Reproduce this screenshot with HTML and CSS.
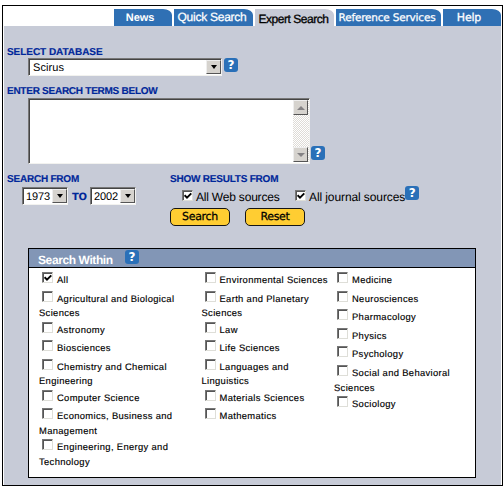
FILE: index.html
```html
<!DOCTYPE html>
<html lang="en">
<head>
<meta charset="utf-8">
<title>Expert Search</title>
<link rel="stylesheet" href="styles.css">
</head>
<body>
<main class="frame">
  <nav class="tabs">
    <a class="tab news">News</a>
    <a class="tab quick">Quick Search</a>
    <a class="tab expert">Expert Search</a>
    <a class="tab refs">Reference Services</a>
    <a class="tab help-tab">Help</a>
  </nav>
  <div class="panel">
    <h2 class="label db-label">SELECT DATABASE</h2>
    <div class="db-row">
      <div class="select db"><span>Scirus</span><i class="drop"></i></div>
      <b class="help">?</b>
    </div>
    <h2 class="label terms-label">ENTER SEARCH TERMS BELOW</h2>
    <div class="terms-row">
      <div class="textarea"><div class="scroll"><i class="arrow up"></i><i class="arrow down"></i></div></div>
      <b class="help">?</b>
    </div>
    <div class="options">
      <section class="from">
        <h2 class="label">SEARCH FROM</h2>
        <div class="years">
          <div class="select year"><span>1973</span><i class="drop"></i></div>
          <span class="to">TO</span>
          <div class="select year"><span>2002</span><i class="drop"></i></div>
        </div>
      </section>
      <section class="results">
        <h2 class="label">SHOW RESULTS FROM</h2>
        <div class="sources">
          <i class="check on"><svg viewBox="0 0 8 8"><path d="M.6 3.2 3 5.6 7.3 1.3"/></svg></i><span class="source web">All Web sources</span>
          <i class="check on"><svg viewBox="0 0 8 8"><path d="M.6 3.2 3 5.6 7.3 1.3"/></svg></i><span class="source">All journal sources</span>
          <b class="help">?</b>
        </div>
        <div class="buttons"><span class="button">Search</span><span class="button">Reset</span></div>
      </section>
    </div>
    <section class="within">
      <header><h3>Search Within</h3><b class="help">?</b></header>
      <div class="columns">
        <ul class="col1">
          <li><i class="check on"><svg viewBox="0 0 8 8"><path d="M.6 3.2 3 5.6 7.3 1.3"/></svg></i><span>All</span></li>
          <li><i class="check"></i><span>Agricultural and Biological</span><p>Sciences</p></li>
          <li><i class="check"></i><span>Astronomy</span></li>
          <li><i class="check"></i><span>Biosciences</span></li>
          <li><i class="check"></i><span>Chemistry and Chemical</span><p>Engineering</p></li>
          <li><i class="check"></i><span>Computer Science</span></li>
          <li><i class="check"></i><span>Economics, Business and</span><p>Management</p></li>
          <li><i class="check"></i><span>Engineering, Energy and</span><p>Technology</p></li>
        </ul>
        <ul class="col2">
          <li><i class="check"></i><span>Environmental Sciences</span></li>
          <li><i class="check"></i><span>Earth and Planetary</span><p>Sciences</p></li>
          <li><i class="check"></i><span>Law</span></li>
          <li><i class="check"></i><span>Life Sciences</span></li>
          <li><i class="check"></i><span>Languages and</span><p>Linguistics</p></li>
          <li><i class="check"></i><span>Materials Sciences</span></li>
          <li><i class="check"></i><span>Mathematics</span></li>
        </ul>
        <ul class="col3">
          <li><i class="check"></i><span>Medicine</span></li>
          <li><i class="check"></i><span>Neurosciences</span></li>
          <li><i class="check"></i><span>Pharmacology</span></li>
          <li><i class="check"></i><span>Physics</span></li>
          <li><i class="check"></i><span>Psychology</span></li>
          <li><i class="check"></i><span>Social and Behavioral</span><p>Sciences</p></li>
          <li><i class="check"></i><span>Sociology</span></li>
        </ul>
      </div>
    </section>
  </div>
</main>
</body>
</html>
```
FILE: styles.css
```css
* { box-sizing: border-box; }
body { margin: 0; background: #fff; color: #000; font-family: "Liberation Sans", Arial, sans-serif; text-rendering: geometricPrecision; overflow: hidden; }
h2, h3, p, ul { margin: 0; padding: 0; }
.frame { width: 501px; height: 481px; margin: 5px 0 0 2px; border: 1px solid #000; padding: 0 1px; display: flex; flex-direction: column; }
.tabs { height: 20px; display: flex; justify-content: flex-end; padding-top: 3px; flex: none; }
.tab { height: 17px; line-height: 17px; background: #2f70b4; color: #fff; font-size: 12px; text-align: center; white-space: nowrap; border-top-right-radius: 9px 6px; }
.news { width: 58px; margin-right: 2px; padding-right: 6px; font-weight: bold; font-size: 11px; line-height: 19px; letter-spacing: -.1px; }
.quick { width: 79px; margin-right: 2px; padding-right: 3px; font-size: 12px; letter-spacing: -.25px; -webkit-text-stroke: .25px #fff; line-height: 17px; }
.expert { width: 79px; margin-right: 2px; padding-right: 2px; background: #c7cbd7; color: #000; font-size: 12px; line-height: 20px; letter-spacing: -.45px; -webkit-text-stroke: .3px #000; }
.refs { width: 105px; margin-right: 2px; padding-right: 3px; font-family: "DejaVu Sans", sans-serif; font-size: 10.5px; line-height: 19px; letter-spacing: -.2px; -webkit-text-stroke: .25px #fff; }
.help-tab { width: 58px; padding-right: 6px; font-family: "DejaVu Sans", sans-serif; font-size: 11px; line-height: 18px; letter-spacing: -.2px; -webkit-text-stroke: .3px #fff; }
.panel { flex: 1; background: #c7cbd7; display: flex; flex-direction: column; padding-left: 3px; }
.label { color: #00279a; font-size: 10px; line-height: 14px; height: 12px; letter-spacing: -.22px; font-weight: bold; white-space: nowrap; -webkit-text-stroke: .15px #00279a; }
.db-label { margin-top: 20px; letter-spacing: -.05px; }
.terms-label { letter-spacing: -.26px; }
.db-row { display: flex; gap: 2px; padding-left: 21px; height: 18px; }
.select { border: 1px solid; border-color: #777 #f2f2ef #f2f2ef #777; box-shadow: inset 1px 1px #444; background: #fff; display: flex; justify-content: space-between; font-size: 11px; }
.select span { padding: 1px 0 0 4px; line-height: 16px; letter-spacing: .1px; }
.db { width: 194px; height: 18px; }
.drop { width: 15px; margin: 1px 0; border: 1px solid; border-color: #eee #555 #555 #eee; background: #d6d3ce; display: grid; place-items: center; }
.drop::before { content: ""; border: 3.5px solid transparent; border-top: 4px solid #000; border-bottom: 0; }
.help { width: 14px; height: 14px; flex: none; border-radius: 3px; background: #2a70b8; color: #fff; text-align: center; font: bold 12px/15px "DejaVu Sans", sans-serif; }
.terms-label { margin-top: 9px; }
.terms-row { display: flex; gap: 1px; align-items: flex-end; padding-left: 21px; margin-top: 1px; height: 66px; }
.textarea { width: 282px; height: 66px; background: #fff; border: 1px solid; border-color: #777 #f2f2ef #f2f2ef #777; box-shadow: inset 1px 1px #444; display: flex; justify-content: flex-end; padding: 1px 0; }
.terms-row .help { margin-bottom: 4px; }
.scroll { width: 16px; background: repeating-conic-gradient(#fff 0 25%, #dedbd6 0 50%) 0 0 / 2px 2px; display: flex; flex-direction: column; justify-content: space-between; }
.arrow { width: 15px; height: 15px; border: 1px solid; border-color: #eee #555 #555 #eee; background: #d6d3ce; display: grid; place-items: center; }
.arrow::before { content: ""; border: 4px solid transparent; }
.up::before { border-bottom-color: #848284; border-top: 0; }
.down::before { border-top-color: #848284; border-bottom: 0; }
.options { display: flex; height: 75px; padding-top: 9px; }
.from { width: 163px; }
.years { display: flex; padding: 2px 0 0 15px; }
.year { width: 46px; height: 18px; }
.year span { padding-left: 3px; letter-spacing: -.15px; }
.to { width: 22px; padding: 0 4px; text-align: center; color: #00279a; font: bold 10px/21px "DejaVu Sans", sans-serif; letter-spacing: -.4px; }
.sources { display: flex; padding-left: 12px; height: 23px; }
.check { width: 11px; height: 11px; flex: none; border: 1px solid; border-color: #777 #deded8 #deded8 #777; box-shadow: inset 1px 1px #555; background: #fff; display: block; }
.check svg { display: block; width: 8px; height: 8px; margin: 1px; }
.check path { fill: none; stroke: #000; stroke-width: 1.9; }
.sources .check { margin-top: 5px; }
.source { font-size: 12px; line-height: 14px; margin: 5px 0 0 3px; white-space: nowrap; letter-spacing: -.1px; }
.web { width: 99px; letter-spacing: -.2px; }
.sources .help { margin-top: 1px; }
.buttons { display: flex; gap: 15px; }
.button { width: 60px; height: 18px; border: 1px solid #151515; border-radius: 5px; background: #ffcd32; text-align: center; font: 11px/16px "DejaVu Sans", sans-serif; letter-spacing: -.3px; -webkit-text-stroke: .25px #000; }
.within { width: 448px; height: 230px; margin: 9px 0 0 21px; background: #fff; border: 1px solid #000; }
.within header { height: 19px; background: #8296b6; border-bottom: 1px solid #000; display: flex; gap: 11px; padding-left: 9px; }
.within header .help { margin-top: 1px; }
.within h3 { width: 76px; color: #fff; font-size: 12px; line-height: 22px; letter-spacing: -.4px; white-space: nowrap; }
.columns { display: flex; padding: 2px 0 0 10px; }
ul { list-style: none; }
.col1 { width: 162.5px; }
.col2 { width: 132.5px; }
li { display: grid; grid-template: 18.6px / 15px 1fr; padding-left: 3px; font-size: 9.4px; letter-spacing: .35px; white-space: nowrap; -webkit-text-stroke: .15px #000; }
li .check { margin-top: 2px; }
li span { line-height: 12px; padding-top: 4px; }
li p { grid-column: 1 / 3; margin-left: -3px; height: 12.4px; line-height: 11px; }
```
